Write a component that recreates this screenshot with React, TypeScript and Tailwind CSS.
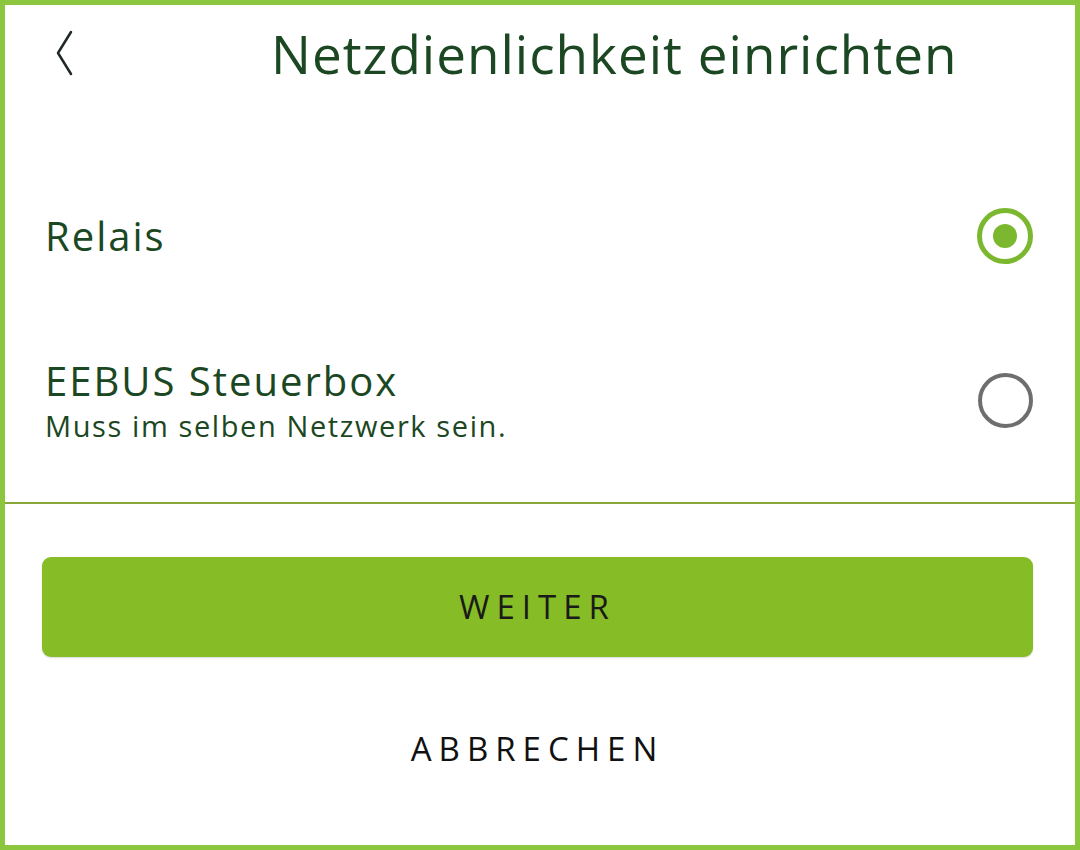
import { useState } from "react";

type Option = { id: string; label: string; hint?: string };

const options: Option[] = [
  { id: "relais", label: "Relais" },
  { id: "eebus", label: "EEBUS Steuerbox", hint: "Muss im selben Netzwerk sein." },
];

function Radio({ checked }: { checked: boolean }) {
  return checked ? (
    <span className="flex h-[56px] w-[56px] shrink-0 items-center justify-center rounded-full border-[5px] border-[#7cb82f]">
      <span className="h-[24px] w-[24px] rounded-full bg-[#7cb82f]" />
    </span>
  ) : (
    <span className="block h-[55px] w-[55px] shrink-0 rounded-full border-[4px] border-[#6e6e6e]" />
  );
}

export default function App() {
  const [selected, setSelected] = useState("relais");

  return (
    <div
      className="flex h-[850px] w-[1080px] flex-col border-[5px] border-[#8cc63f] bg-white text-[#1b4723]"
      style={{ fontFamily: '"Open Sans", "Noto Sans", sans-serif' }}
    >
      <header className="flex h-[110px] items-center px-[48px]">
        <button type="button" aria-label="Zurück" className="-mt-[14px] text-[#1f2a22]">
          <svg width="22" height="48" viewBox="0 0 22 48" fill="none">
            <path d="M18 3 L5 24 L18 45" stroke="currentColor" strokeWidth="2.5" strokeLinecap="round" strokeLinejoin="round" />
          </svg>
        </button>
        <h1 className="-mt-[14px] ml-[196px] text-[53px] leading-none tracking-[1px]">Netzdienlichkeit einrichten</h1>
      </header>

      <div className="flex flex-col gap-[81px] pl-[40px] pr-[42px] pt-[81px]">
        {options.map((o) => (
          <button
            key={o.id}
            type="button"
            onClick={() => setSelected(o.id)}
            className={`flex items-center justify-between text-left ${o.hint ? "h-[86px]" : "h-[80px]"}`}
          >
            <div>
              <p className="text-[40px] leading-[48px] tracking-[2px]">{o.label}</p>
              {o.hint && <p className="mt-[4px] text-[29px] leading-[34px] tracking-[1.6px]">{o.hint}</p>}
            </div>
            <Radio checked={selected === o.id} />
          </button>
        ))}
      </div>

      <div className="mt-[59px] h-[2px] bg-[#8aa83a]" />

      <div className="flex flex-col pl-[37px] pr-[42px] pt-[53px]">
        <button
          type="button"
          className="h-[100px] rounded-[9px] bg-[#86bc25] text-[33px] tracking-[7px] text-[#1a1a1a] shadow-[0_1px_2px_rgba(0,0,0,0.15)]"
        >
          WEITER
        </button>
        <button type="button" className="mt-[64px] h-[56px] text-[33px] tracking-[7px] text-[#111]">
          ABBRECHEN
        </button>
      </div>
    </div>
  );
}
